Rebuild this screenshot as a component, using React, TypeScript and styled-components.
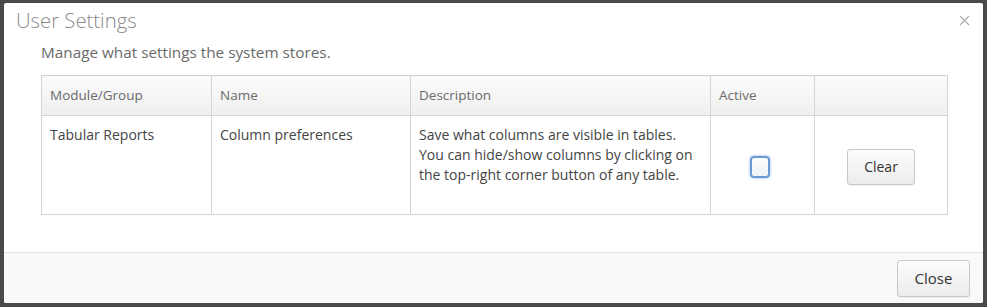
import React from "react";
import styled, { createGlobalStyle } from "styled-components";

const GlobalStyle = createGlobalStyle`
  html, body {
    margin: 0;
    padding: 0;
    background: #4a4a4a;
    font-family: "Open Sans", "Liberation Sans", sans-serif;
  }
`;

const Backdrop = styled.div`
  width: 987px;
  height: 307px;
  padding: 3px 4px 4px 4px;
  box-sizing: border-box;
  background: #4a4a4a;
`;

const Modal = styled.div`
  width: 979px;
  height: 300px;
  background: #fff;
  border-radius: 2px;
  display: flex;
  flex-direction: column;
  overflow: hidden;
`;

const ModalHeader = styled.div`
  display: flex;
  align-items: center;
  justify-content: space-between;
  height: 34px;
  padding: 0 12px 0 12px;
`;

const Title = styled.h3`
  margin: 0;
  font-size: 20.3px;
  font-weight: 300;
  color: #8a8a8a;
  line-height: 34px;
`;

const CloseX = styled.button`
  border: none;
  background: none;
  padding: 0;
  width: 14px;
  height: 14px;
  display: flex;
  align-items: center;
  justify-content: center;
  cursor: pointer;
`;

const ModalBody = styled.div`
  flex: 1;
  padding: 4px 37px 0 37px;
`;

const Lead = styled.p`
  margin: 0 0 12px 0;
  font-size: 15.3px;
  color: #6a6a6a;
  line-height: 22px;
`;

const Table = styled.table`
  width: 906px;
  border-collapse: collapse;
  table-layout: fixed;
  font-size: 14px;
  color: #444;
`;

const Th = styled.th<{ w: number }>`
  width: ${(p) => p.w}px;
  height: 40px;
  padding: 0 8px 1px;
  text-align: left;
  font-weight: 400;
  font-size: 13.5px;
  color: #6a6a6a;
  border: 1px solid #d4d4d4;
  background: linear-gradient(#fbfbfb, #efefef);
  box-sizing: border-box;
`;

const Td = styled.td<{ center?: boolean }>`
  height: 99px;
  padding: ${(p) => (p.center ? "11px 8px 8px" : "9px 8px 8px")};
  vertical-align: ${(p) => (p.center ? "middle" : "top")};
  text-align: ${(p) => (p.center ? "center" : "left")};
  border: 1px solid #d4d4d4;
  line-height: 20px;
  box-sizing: border-box;
`;

const CheckBox = styled.span`
  display: inline-block;
  width: 16px;
  height: 18px;
  border: 2px solid #6a9ad6;
  border-radius: 4px;
  background: linear-gradient(#fdfdfd, #eef1f5);
  box-shadow: 0 0 3px rgba(80, 140, 220, 0.6);
  vertical-align: middle;
  margin-right: 5px;
`;

const Button = styled.button<{ w: number; h: number; size: number }>`
  width: ${(p) => p.w}px;
  height: ${(p) => p.h}px;
  font-family: "Open Sans", "Liberation Sans", sans-serif;
  font-size: ${(p) => p.size}px;
  color: #333;
  border: 1px solid #c8c8c8;
  border-radius: 3px;
  background: linear-gradient(#fcfcfc, #ececec);
  box-shadow: 0 1px 1px rgba(0, 0, 0, 0.05);
  cursor: pointer;
`;

const ModalFooter = styled.div`
  height: 51px;
  border-top: 1px solid #e2e2e2;
  background: #f9f9f9;
  display: flex;
  align-items: center;
  justify-content: flex-end;
  padding: 0 13px;
  box-sizing: border-box;
`;

const App = () => {
  return (
    <>
      <GlobalStyle />
      <Backdrop>
        <Modal>
          <ModalHeader>
            <Title>User Settings</Title>
            <CloseX aria-label="close">
              <svg width="11" height="11" viewBox="0 0 11 11">
                <path d="M1 1L10 10M10 1L1 10" stroke="#aaa" strokeWidth="1.1" />
              </svg>
            </CloseX>
          </ModalHeader>
          <ModalBody>
            <Lead>Manage what settings the system stores.</Lead>
            <Table>
              <thead>
                <tr>
                  <Th w={170}>Module/Group</Th>
                  <Th w={199}>Name</Th>
                  <Th w={300}>Description</Th>
                  <Th w={104}>Active</Th>
                  <Th w={133}></Th>
                </tr>
              </thead>
              <tbody>
                <tr>
                  <Td>Tabular Reports</Td>
                  <Td>Column preferences</Td>
                  <Td>
                    Save what columns are visible in tables. You can hide/show
                    columns by clicking on the top-right corner button of any
                    table.
                  </Td>
                  <Td center>
                    <CheckBox />
                  </Td>
                  <Td center>
                    <Button w={68} h={36} size={14}>
                      Clear
                    </Button>
                  </Td>
                </tr>
              </tbody>
            </Table>
          </ModalBody>
          <ModalFooter>
            <Button w={73} h={37} size={15}>
              Close
            </Button>
          </ModalFooter>
        </Modal>
      </Backdrop>
    </>
  );
};

export default App;
